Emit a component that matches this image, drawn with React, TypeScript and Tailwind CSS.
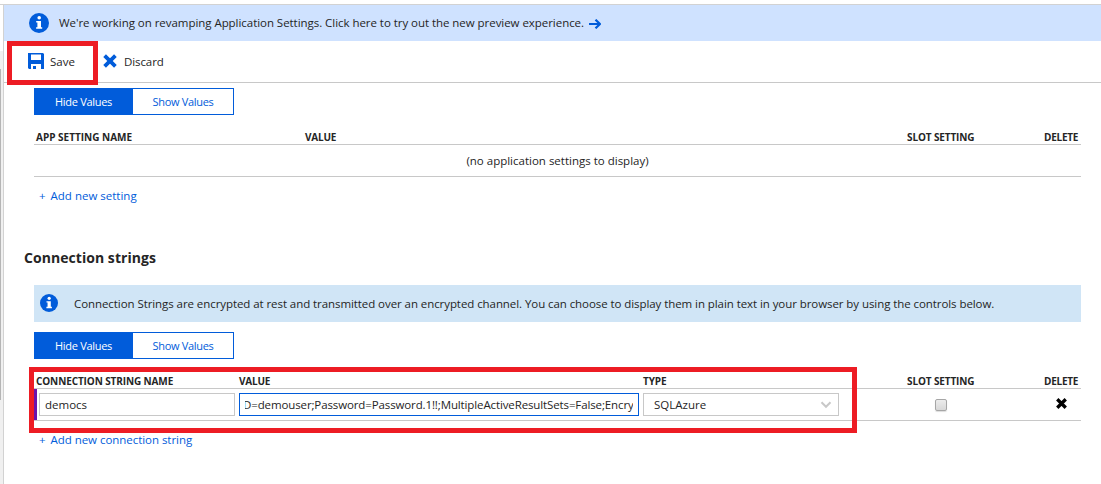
import type { ReactNode } from "react";

function InfoIcon({ size }: { size: number }) {
  return (
    <svg width={size} height={size} viewBox="0 0 20 20" className="shrink-0">
      <circle cx="10" cy="10" r="10" fill="#015cda" />
      <circle cx="10.2" cy="4.8" r="1.8" fill="#fff" />
      <path d="M7.2 8h4.8v6.3h1.2v1.5H7.1v-1.5h1.3V9.5H7.2z" fill="#fff" />
    </svg>
  );
}

function SaveIcon() {
  return (
    <svg width="16" height="16" viewBox="0 0 16 16" className="-mt-[2px] shrink-0">
      <path
        fillRule="evenodd"
        d="M0 0h15l1 1v15h-3v-5H3v5H1l-1-1zM3 1.5v5.5h10V1.5z"
        fill="#015cda"
      />
      <path d="M5 13h3v3H5z" fill="#015cda" />
    </svg>
  );
}

function CrossIcon({ size, color, width }: { size: number; color: string; width: number }) {
  return (
    <svg width={size} height={size} viewBox="0 0 14 14" className="shrink-0">
      <path d="M1.6 1.6L12.4 12.4M12.4 1.6L1.6 12.4" stroke={color} strokeWidth={width} />
    </svg>
  );
}

function ValueToggle() {
  return (
    <div className="flex h-[27px] w-[200px] text-[11px] leading-[27px]">
      <div className="w-[99px] bg-[#015cda] text-center font-medium text-white">
        <span className="tracking-[-0.3px]">Hide Values</span>
      </div>
      <div className="flex-1 border border-l-0 border-[#015cda] text-center leading-[25px] text-[#015cda]">
        <span className="tracking-[-0.3px]">Show Values</span>
      </div>
    </div>
  );
}

function Head({ className, children }: { className: string; children: ReactNode }) {
  return <div className={`whitespace-nowrap ${className}`}>{children}</div>;
}

export default function App() {
  return (
    <div className="relative h-[484px] w-[1101px] overflow-hidden bg-white pt-1 font-['Open_Sans','Noto_Sans',sans-serif] text-[11.5px] text-[#252525]">
      <div className="flex h-[480px] border-t border-[#d2d2d2]">
        <div className="flex w-1 shrink-0 flex-col border-r border-[#d2d2d2]">
          <div className="mt-[46px] flex-1 bg-[#f0f0f0] pt-[18px]">
            <div className="h-[331px] w-px bg-[#b5b5b5]" />
          </div>
        </div>

        <main className="flex min-w-0 flex-1 flex-col">
          <div className="flex h-9 shrink-0 items-center bg-[#cfe2ff] pl-[25px]">
            <InfoIcon size={20} />
            <span className="ml-[10px] whitespace-nowrap tracking-[-0.045px]">
              We're working on revamping Application Settings. Click here to try out the new preview
              experience.
            </span>
            <svg width="12" height="10" viewBox="0 0 12 10" className="mt-[2px] ml-[5px]">
              <path d="M0 5h11M6.5 0.7L11 5L6.5 9.3" fill="none" stroke="#015cda" strokeWidth="2.2" />
            </svg>
          </div>

          <div className="flex h-[42px] shrink-0 items-center border-b border-[#c8c8c8] pl-6">
            <SaveIcon />
            <span className="ml-[6px] w-[53px]">Save</span>
            <div className="-mt-[2px]">
              <CrossIcon size={14} color="#015cda" width={3.8} />
            </div>
            <span className="ml-[7px] tracking-[-0.1px]">Discard</span>
          </div>

          <section className="mt-[5px] mr-5 ml-[30px]">
            <ValueToggle />
            <div className="mt-[14px] flex h-4 border-b border-[#c8c8c8] pl-[2px] text-[10px] leading-[17px] font-bold">
              <Head className="w-[269px]">APP SETTING NAME</Head>
              <Head className="w-[602px] tracking-[-0.2px]">VALUE</Head>
              <Head className="w-[137px] tracking-[-0.12px]">SLOT SETTING</Head>
              <Head className="tracking-[-0.25px]">DELETE</Head>
            </div>
            <div className="h-8 border-b border-[#c8c8c8] text-center leading-[31px]">
              (no application settings to display)
            </div>
            <div className="mt-[10px] ml-[5px] h-[18px] leading-[18px] text-[#015cda]">
              <span className="mr-[2px]">+</span> Add new setting
            </div>
          </section>

          <h2 className="mt-[42px] ml-5 h-[22px] text-[14px] leading-[22px] font-bold tracking-[0.05px]">
            Connection strings
          </h2>

          <section className="mt-[16px] mr-5 ml-[30px]">
            <div className="flex h-[37px] items-center bg-[#d0e5f6] pl-[6px]">
              <div className="-mt-[2px]">
                <InfoIcon size={18} />
              </div>
              <span className="ml-[16px] whitespace-nowrap tracking-[-0.072px]">
                Connection Strings are encrypted at rest and transmitted over an encrypted channel. You
                can choose to display them in plain text in your browser by using the controls below.
              </span>
            </div>
            <div className="mt-[10px]">
              <ValueToggle />
            </div>
            <div className="mt-[14px] flex h-4 border-b border-[#c8c8c8] pl-[2px] text-[10px] leading-[17px] font-bold">
              <Head className="w-[203px] tracking-[-0.11px]">CONNECTION STRING NAME</Head>
              <Head className="w-[404px] tracking-[-0.2px]">VALUE</Head>
              <Head className="w-[264px] tracking-[-0.1px]">TYPE</Head>
              <Head className="w-[137px] tracking-[-0.12px]">SLOT SETTING</Head>
              <Head className="tracking-[-0.25px]">DELETE</Head>
            </div>
            <div className="flex h-8 border-b border-[#c8c8c8]">
              <div className="h-[31px] w-[3px] bg-[#6b12ac]" />
              <div className="mt-1 ml-[2px] h-[23px] w-[196px] border border-[#c8c8c8] pl-[5px] leading-[22px]">
                democs
              </div>
              <div className="mt-1 ml-1 h-[23px] w-[400px] border border-[#015cda] px-[5px] leading-[22px]">
                <div className="h-full overflow-hidden whitespace-nowrap">
                  <span className="-ml-[2px] tracking-[-0.12px]">
                    D=demouser;Password=Password.1!!;MultipleActiveResultSets=False;Encry
                  </span>
                </div>
              </div>
              <div className="mt-1 ml-1 flex h-[23px] w-[196px] items-center justify-between border border-[#c8c8c8] pr-[6px] pl-[10px] leading-[22px]">
                SQLAzure
                <svg width="12" height="8" viewBox="0 0 12 8">
                  <path d="M1.5 1.2L6 5.8L10.5 1.2" fill="none" stroke="#c8c8c8" strokeWidth="2" />
                </svg>
              </div>
              <div className="mt-[10px] ml-[96px] h-3 w-3 rounded-[2px] border border-[#a6a6a6] bg-linear-to-b from-[#ececec] to-[#d8d8d8] shadow-[0_1px_1px_#ddd]" />
              <div className="mt-[9px] ml-[109px]">
                <CrossIcon size={11} color="#000" width={4.2} />
              </div>
            </div>
            <div className="mt-[10px] ml-[5px] h-[18px] leading-[18px] tracking-[-0.04px] text-[#015cda]">
              <span className="mr-[2px]">+</span> Add new connection string
            </div>
          </section>
        </main>
      </div>

      <div className="absolute top-[41px] left-[7px] h-[44px] w-[91px] border-5 border-[#ed1c24]" />
      <div className="absolute top-[367px] left-[29px] h-[66px] w-[828px] border-5 border-[#ed1c24]" />
    </div>
  );
}
